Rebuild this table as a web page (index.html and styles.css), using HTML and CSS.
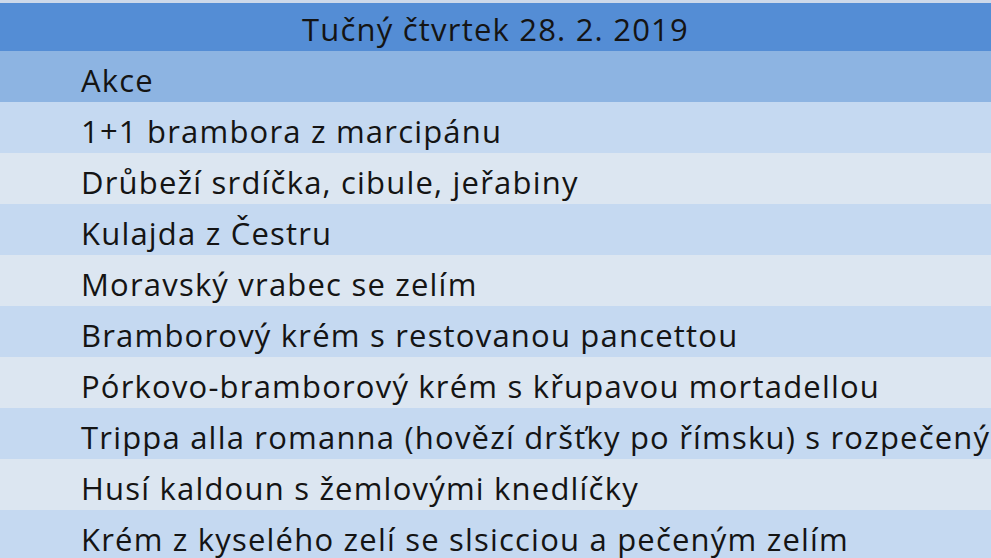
FILE: index.html
```html
<!DOCTYPE html>
<html lang="cs">
<head>
<meta charset="utf-8">
<title>Tučný čtvrtek</title>
<link rel="stylesheet" href="styles.css">
</head>
<body>
<div class="sheet">
  <div class="strip"></div>
  <div class="row title">Tučný čtvrtek 28. 2. 2019</div>
  <div class="row head">Akce</div>
  <div class="row band1">1+1 brambora z marcipánu</div>
  <div class="row band2">Drůbeží srdíčka, cibule, jeřabiny</div>
  <div class="row band1">Kulajda z Čestru</div>
  <div class="row band2">Moravský vrabec se zelím</div>
  <div class="row band1">Bramborový krém s restovanou pancettou</div>
  <div class="row band2">Pórkovo-bramborový krém s křupavou mortadellou</div>
  <div class="row band1">Trippa alla romanna (hovězí dršťky po římsku) s rozpečeným chlebem</div>
  <div class="row band2">Husí kaldoun s žemlovými knedlíčky</div>
  <div class="row band1">Krém z kyselého zelí se slsicciou a pečeným zelím</div>
</div>
</body>
</html>
```
FILE: styles.css
```css
html, body {
  margin: 0;
  padding: 0;
  background: #dce6f1;
  overflow: hidden;
}
.sheet {
  width: 991px;
  height: 558px;
  overflow: hidden;
  display: flex;
  flex-direction: column;
  font-family: "Open Sans", Lato, sans-serif;
  font-size: 31px;
  letter-spacing: 1.2px;
  font-variant-ligatures: none;
  color: #141414;
}
.strip {
  height: 3px;
  flex: none;
  background: #cdd9ea;
}
.row {
  flex: none;
  height: 51px;
  box-sizing: border-box;
  padding: 9px 0 0 81px;
  line-height: 40px;
  white-space: nowrap;
  overflow: hidden;
}
.title {
  height: 48px;
  padding: 6px 0 0 0;
  text-align: center;
  background: #548dd5;
}
.head { background: #8db4e2; }
.band1 { background: #c5d9f1; }
.band2 { background: #dce6f1; }
```
